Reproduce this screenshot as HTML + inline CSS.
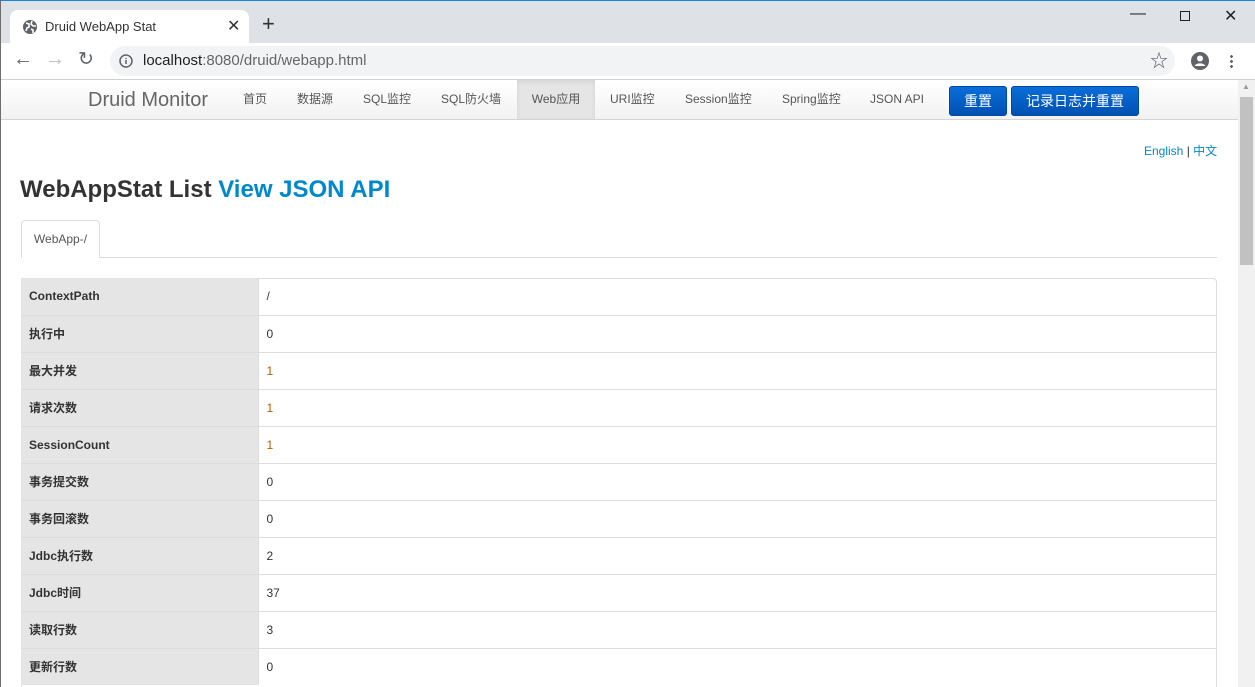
<!DOCTYPE html>
<html><head><meta charset="utf-8"><style>
*{box-sizing:border-box;margin:0;padding:0}
html{overflow:hidden;width:1255px;height:687px}
body{width:1255px;height:687px;overflow:hidden;font-family:"Liberation Sans","Noto Sans CJK SC",sans-serif;background:#fff;position:relative}
.tb{position:absolute;left:0;top:0;width:1255px;height:43px;background:#dee1e6;border-top:1px solid #1a86d9}
.tab{position:absolute;left:10px;top:9px;width:239px;height:34px;background:#fff;border-radius:8px 8px 0 0;font-size:13px;color:#333}
.tool{position:absolute;left:0;top:43px;width:1255px;height:37px;background:#fff;border-bottom:1px solid #d0d0d0}
.omni{position:absolute;left:110px;top:3px;width:1065px;height:30px;background:#f1f3f4;border-radius:15px;font-size:15px;color:#202124;line-height:30px;padding-left:33px}
.nav{position:absolute;left:0;top:80px;width:1238px;height:40px;background:linear-gradient(#fff,#f2f2f2);border-bottom:1px solid #d4d4d4;font-size:12px;color:#555}
.nav span{position:absolute;top:0;line-height:39px}
.btn{position:absolute;top:6px;height:30px;background:linear-gradient(#0a6ed8,#0050b3);border:1px solid #004a9e;border-radius:3px;color:#fff;font-size:14px;line-height:28px;text-align:center}
.sb{position:absolute;left:1238px;top:80px;width:17px;height:607px;background:#f1f1f1}
table{position:absolute;left:21px;top:278px;width:1196px;border-collapse:collapse;font-size:12px}
td{height:37px;border-top:1px solid #ddd;padding-left:8px;color:#333}
td.l{width:237px;background:#e5e5e5;font-weight:bold;border-right:1px solid #ddd}
.o{color:#b35c00}
</style></head><body>
<div class="tb">
 <div class="tab">
  <svg style="position:absolute;left:12px;top:9px" width="16" height="16" viewBox="0 0 16 16"><circle cx="8" cy="8" r="7" fill="#5f6368"/><path d="M4 4l3 1 0 3-2 1-1 3M10 2l-1 3 2 2 3 0M9 10l2 1 0 3" stroke="#fff" stroke-width="1.6" fill="none"/></svg>
  <span style="position:absolute;left:35px;top:9px">Druid WebApp Stat</span>
  <span style="position:absolute;left:217px;top:6px;font-size:16px">✕</span>
 </div>
 <span style="position:absolute;left:262px;top:12px;font-size:22px;color:#333;line-height:22px">+</span>
 <span style="position:absolute;left:1130px;top:4px;font-size:16px;color:#222">—</span>
 <div style="position:absolute;left:1180px;top:10px;width:10px;height:10px;border:1px solid #222"></div>
 <span style="position:absolute;left:1224px;top:5px;font-size:16px;color:#222">✕</span>
</div>
<div class="tool">
 <span style="position:absolute;left:13px;top:5px;font-size:20px;color:#5f6368">←</span>
 <span style="position:absolute;left:45px;top:5px;font-size:20px;color:#bbb">→</span>
 <span style="position:absolute;left:78px;top:5px;font-size:19px;color:#5f6368">↻</span>
 <div class="omni"><svg style="position:absolute;left:9px;top:8px" width="14" height="14" viewBox="0 0 14 14"><circle cx="7" cy="7" r="6" stroke="#5f6368" stroke-width="1.5" fill="none"/><path d="M7 6v4M7 4v1" stroke="#5f6368" stroke-width="1.5"/></svg>localhost<span style="color:#666">:8080/druid/webapp.html</span>
  <span style="position:absolute;right:7px;top:0;font-size:18px;color:#5f6368">☆</span></div>
 <svg style="position:absolute;left:1190px;top:8px" width="20" height="20" viewBox="0 0 20 20"><circle cx="10" cy="10" r="9" fill="#5f6368"/><circle cx="10" cy="7.5" r="3" fill="#fff"/><path d="M4.5 15c2-3.5 9-3.5 11 0" fill="#fff"/></svg>
 <div style="position:absolute;left:1230px;top:11px;width:3px;height:14px;background:radial-gradient(circle,#5f6368 1.3px,transparent 1.5px) 0 0/3px 5px"></div>
</div>
<div class="nav">
 <span style="left:88px;font-size:20px;color:#666;line-height:40px">Druid Monitor</span>
 <span style="left:243px">首页</span><span style="left:297px">数据源</span><span style="left:363px">SQL监控</span><span style="left:441px">SQL防火墙</span>
 <span style="left:517px;width:78px;height:39px;background:#e5e5e5;text-align:center;box-shadow:inset 0 2px 5px rgba(0,0,0,.08)">Web应用</span>
 <span style="left:610px">URI监控</span><span style="left:685px">Session监控</span><span style="left:782px">Spring监控</span><span style="left:870px">JSON API</span>
 <div class="btn" style="left:949px;width:58px">重置</div>
 <div class="btn" style="left:1011px;width:128px">记录日志并重置</div>
</div>
<div class="sb"><div style="position:absolute;left:2px;top:17px;width:13px;height:168px;background:#c1c1c1"></div><span style="position:absolute;left:4px;top:2px;font-size:8px;color:#999">▲</span></div>
<div style="position:absolute;left:1144px;top:142px;font-size:12px;color:#0088cc">English <span style="color:#333">|</span> 中文</div>
<div style="position:absolute;left:20px;top:176px;font-size:24px;font-weight:bold;color:#333">WebAppStat List <span style="color:#0088cc">View JSON API</span></div>
<div style="position:absolute;left:21px;top:257px;width:1196px;height:1px;background:#ddd"></div>
<div style="position:absolute;left:21px;top:220px;width:79px;height:38px;background:#fff;border:1px solid #ddd;border-bottom:none;border-radius:4px 4px 0 0;font-size:12px;color:#555;text-align:center;line-height:36px">WebApp-/</div>
<div style="position:absolute;left:21px;top:278px;width:1196px;height:420px;border:1px solid #ddd;border-radius:4px"></div>
<table>
<tr><td class="l" style="border-top:none">ContextPath</td><td style="border-top:none">/</td></tr>
<tr><td class="l">执行中</td><td>0</td></tr>
<tr><td class="l">最大并发</td><td class="o">1</td></tr>
<tr><td class="l">请求次数</td><td class="o">1</td></tr>
<tr><td class="l">SessionCount</td><td class="o">1</td></tr>
<tr><td class="l">事务提交数</td><td>0</td></tr>
<tr><td class="l">事务回滚数</td><td>0</td></tr>
<tr><td class="l">Jdbc执行数</td><td>2</td></tr>
<tr><td class="l">Jdbc时间</td><td>37</td></tr>
<tr><td class="l">读取行数</td><td>3</td></tr>
<tr><td class="l">更新行数</td><td>0</td></tr>
</table>
<div style="position:absolute;left:0;top:0;width:1px;height:687px;background:#6e6e6e"></div>
</body></html>
